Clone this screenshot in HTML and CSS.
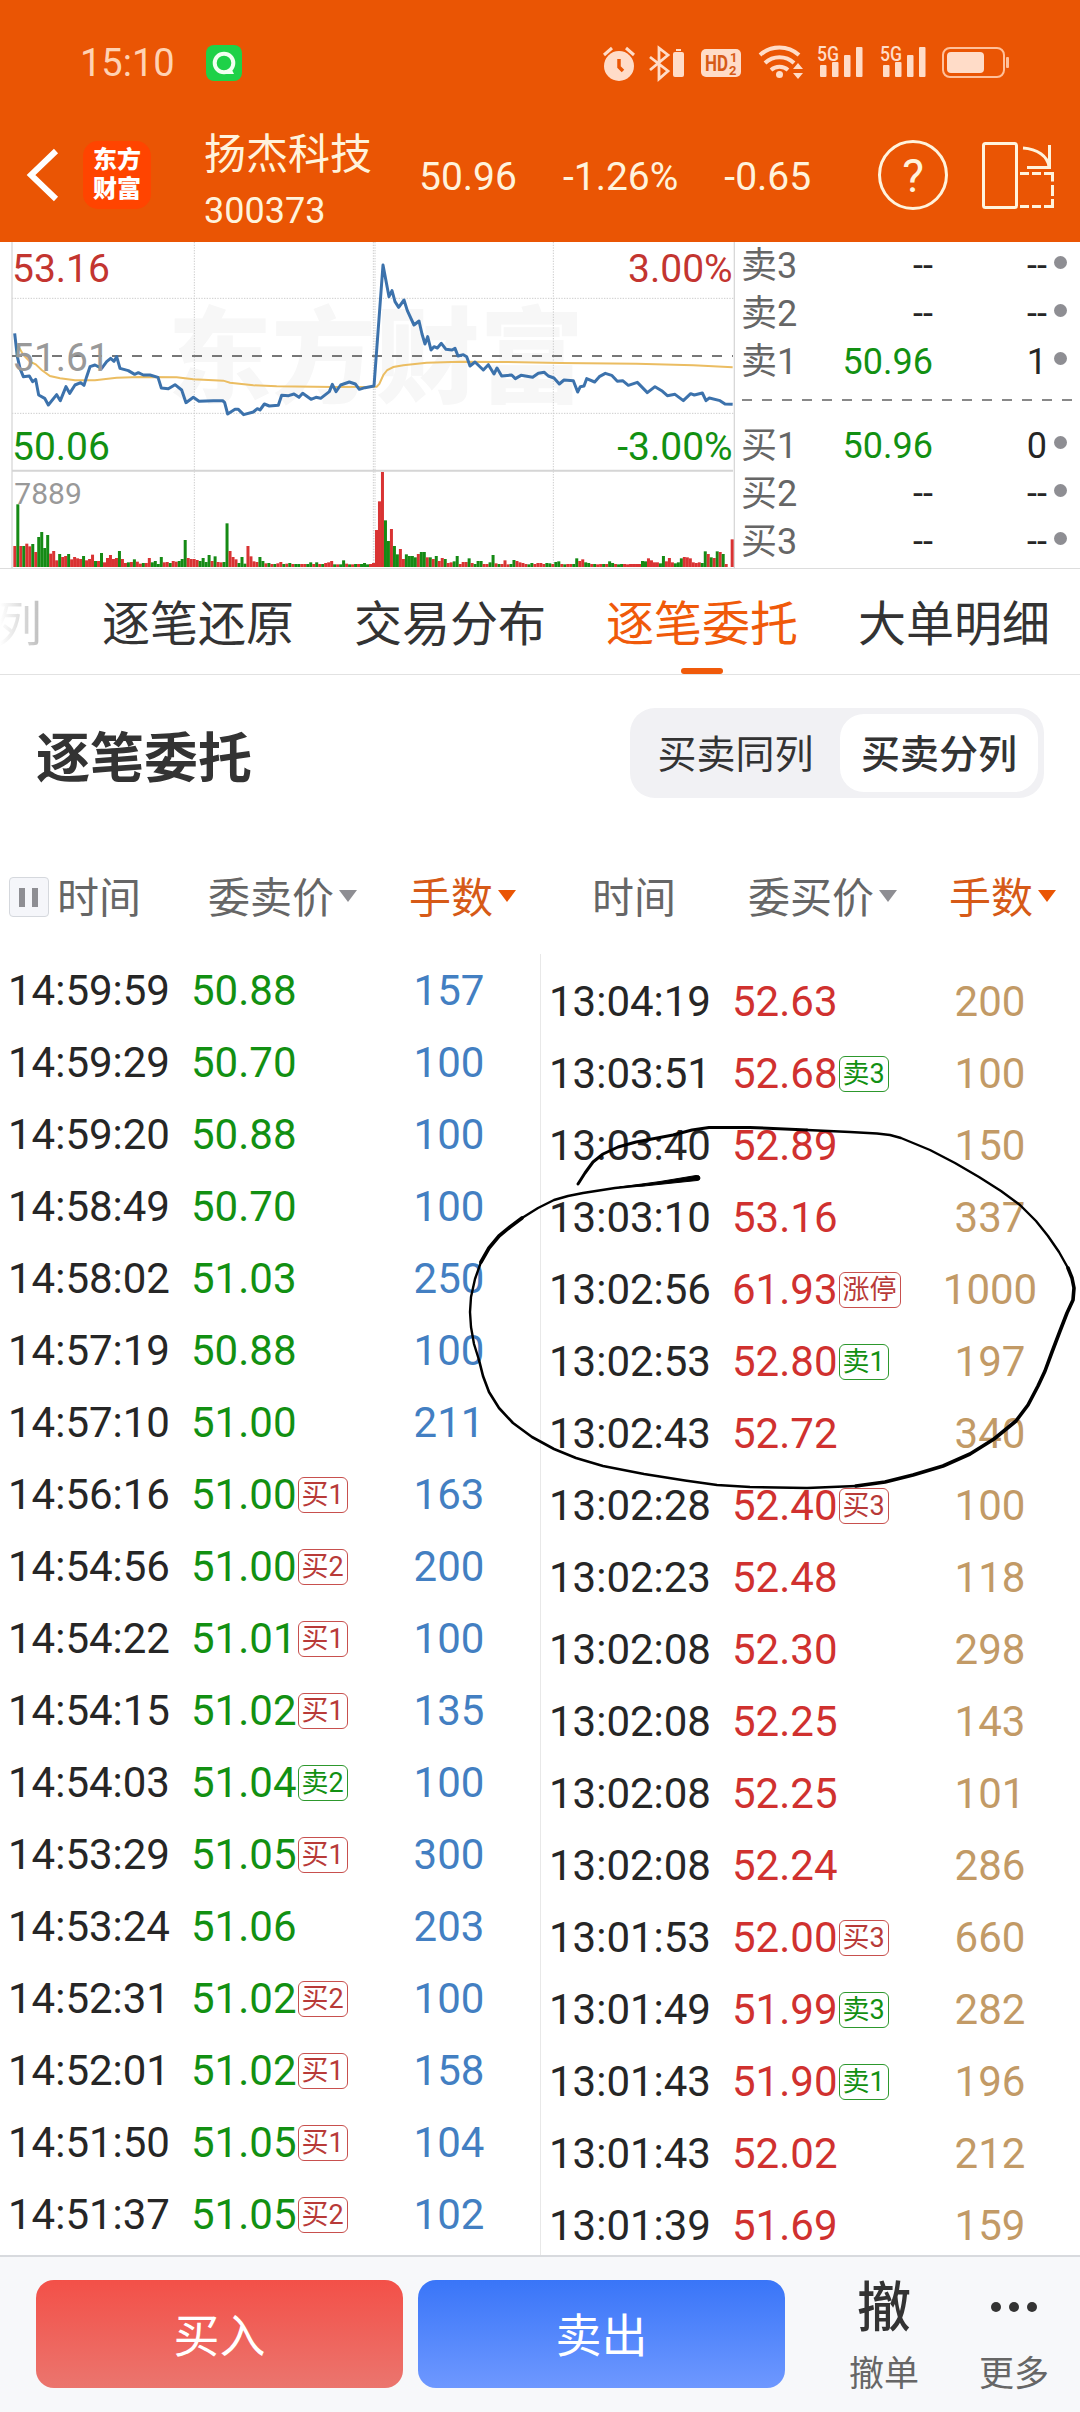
FILE: index.html
```html
<!DOCTYPE html>
<html lang="zh-CN">
<head>
    <meta charset="UTF-8">
    <meta name="viewport" content="width=device-width, initial-scale=1.0">
    <title>逐笔委托</title>
    <link rel="stylesheet" href="styles.css">
</head>
<body>
    <header class="header">
        <div class="status-bar">
            <span class="clock">15:10</span>
            <svg class="app-icon" width="36" height="36" viewBox="0 0 36 36">
                <rect width="36" height="36" rx="8" fill="#1ed148"/>
                <circle cx="18" cy="18" r="9.3" fill="none" stroke="#f2fff2" stroke-width="4"/>
                <path d="M20 26l5-3 3 6h-10z" fill="#f2fff2"/>
            </svg>
            <svg class="status-icons" width="410" height="36" viewBox="0 0 410 36" fill="#ffdcc8">
                <!-- 闹钟 -->
                <circle cx="19" cy="21" r="15"/>
                <path d="M4 10l8-7M26 3l8 7" stroke="#ffdcc8" stroke-width="3" fill="none"/>
                <path d="M19 14v8l4 4" stroke="#ea5504" stroke-width="3.5" fill="none"/>
                <!-- 蓝牙 -->
                <path d="M50 12l18 14-9 8V3l9 7-18 15" stroke="#ffdcc8" stroke-width="2.8" fill="none"/>
                <rect x="73" y="7" width="11" height="25" rx="2"/>
                <rect x="76" y="4" width="5" height="2"/>
                <!-- HD -->
                <rect x="101" y="4" width="40" height="28" rx="5"/>
                <text class="hd" x="105" y="26" textLength="23" lengthAdjust="spacingAndGlyphs">HD</text>
                <text class="hd-num" x="130" y="17">1</text>
                <text class="hd-num" x="129" y="29.500">2</text>
                <!-- WiFi -->
                <path d="M160 10a29 29 0 0 1 39 0M165 18a21 21 0 0 1 29 0M171 25a13 13 0 0 1 17 0" stroke="#ffdcc8" stroke-width="4" fill="none"/>
                <circle cx="179.500" cy="29.500" r="3.500"/>
                <path d="M193 24l5-6 5 6zM193 28l5 6 5-6z"/>
                <!-- 信号 -->
                <g id="signal">
                    <text class="net" x="217" y="16" textLength="22" lengthAdjust="spacingAndGlyphs">5G</text>
                    <rect x="220" y="20" width="6.500" height="12" rx="1"/>
                    <rect x="232" y="17" width="6.500" height="15" rx="1"/>
                    <rect x="244" y="10" width="6.500" height="22" rx="1"/>
                    <rect x="256" y="2" width="6.500" height="30" rx="1"/>
                </g>
                <use href="#signal" x="63"/>
                <!-- 电量 -->
                <rect x="343" y="3" width="61" height="29" rx="7" fill="none" stroke="#ffc09a" stroke-width="2"/>
                <rect x="347" y="7" width="37" height="21" rx="4"/>
                <rect x="406" y="12" width="3" height="11" rx="1" fill="#ffc09a"/>
            </svg>
        </div>
        <div class="nav-bar">
            <svg class="back" width="36" height="58" viewBox="0 0 36 58">
                <path d="M32 5L7 29l25 24" fill="none" stroke="#fff" stroke-width="6"/>
            </svg>
            <div class="logo">东方<br>财富</div>
            <div class="stock">
                <div class="stock-name">扬杰科技</div>
                <div class="stock-code">300373</div>
            </div>
            <div class="quote">
                <span>50.96</span>
                <span>-1.26%</span>
                <span>-0.65</span>
            </div>
            <div class="help">?</div>
            <svg class="rotate" width="76" height="70" viewBox="0 0 76 70" fill="none" stroke="#fff3dc" stroke-width="3">
                <rect x="3.500" y="3.500" width="33" height="64" rx="2"/>
                <path d="M43 8c14 1 25 8 26 19M69.500 5v23M47 27.500h24"/>
                <path d="M40 33.500h9M52 33.500h9M64 33.500h8.500v8M72.500 45v11M72.500 59v7.500h-8.500M61 66.500h-9M49 66.500h-9"/>
            </svg>
        </div>
    </header>

    <section class="market">
        <svg class="chart" width="738" height="326" viewBox="0 6 2214 978">
            <text class="watermark" x="503" y="465">东方财富</text>
            <g class="grid">
                <path d="M36 175H2200M36 520H2200M583 6V981M1120 6V981M1125 6V981M1660 6V981"/>
            </g>
            <path class="frame" d="M36 6V984M2203 6V984"/>
            <path class="frame-mid" d="M36 692H2199"/>
            <path class="zero-line" d="M36 348H2199"/>
            <g id="volume"></g>
            <polyline class="avg-line" points="56,320 70,345 90,365 107,373 125,390 150,408 180,415 225,421 285,421 350,413 420,411 530,412 580,418 670,422 690,428 760,436 830,439 1000,441 1130,440 1138,432 1150,405 1162,390 1180,381 1210,376 1280,368 1380,365 1510,366 1680,369 1910,371 2080,376 2198,382"/>
            <polyline class="price-line" points="44,280 52,350 60,385 70,410 88,408 98,425 107,418 116,465 134,475 145,495 170,464 181,482 198,440 209,460 225,435 242,428 252,436 260,410 270,380 285,375 305,385 320,365 332,355 342,364 350,350 360,385 385,392 404,403 415,398 430,405 450,405 474,412 484,444 505,446 525,434 545,450 558,488 580,472 597,484 640,482 668,482 674,488 683,522 705,508 715,508 731,524 760,516 772,506 780,510 793,492 808,498 835,496 845,466 866,467 882,462 897,472 908,460 933,478 948,472 962,475 988,455 997,433 1008,455 1022,435 1048,426 1066,432 1078,448 1095,443 1122,438 1149,75 1167,170 1176,152 1185,185 1196,202 1212,180 1222,212 1242,255 1257,243 1266,282 1275,312 1283,290 1293,330 1302,320 1312,324 1324,310 1338,328 1356,330 1365,325 1374,348 1390,344 1400,350 1410,378 1425,366 1450,390 1465,374 1482,402 1491,384 1505,408 1535,405 1546,416 1563,406 1598,412 1615,400 1633,397 1645,408 1662,414 1678,432 1692,420 1720,422 1733,456 1741,440 1752,438 1760,416 1784,426 1798,410 1816,400 1835,406 1852,424 1868,422 1885,436 1912,427 1942,458 1965,440 1985,452 2002,467 2025,463 2050,482 2072,461 2083,465 2107,459 2118,482 2128,474 2160,482 2175,492 2198,493"/>
            <text class="label red" x="36" y="126">53.16</text>
            <text class="label gray" x="36" y="393">51.61</text>
            <text class="label green" x="36" y="661">50.06</text>
            <text class="label red" x="2198" y="126" text-anchor="end">3.00%</text>
            <text class="label green" x="2198" y="661" text-anchor="end">-3.00%</text>
            <text class="vol-label" x="43" y="792">7889</text>
        </svg>
        <div class="handicap">
            <div class="level"><span>卖3</span><b>--</b><i>--</i><em></em></div>
            <div class="level"><span>卖2</span><b>--</b><i>--</i><em></em></div>
            <div class="level"><span>卖1</span><b class="green">50.96</b><i>1</i><em></em></div>
            <svg class="level-split" width="338" height="36" viewBox="0 0 338 36">
                <path d="M4 14H334" stroke="#888" stroke-width="2" stroke-dasharray="10 10"/>
            </svg>
            <div class="level"><span>买1</span><b class="green">50.96</b><i>0</i><em></em></div>
            <div class="level"><span>买2</span><b>--</b><i>--</i><em></em></div>
            <div class="level"><span>买3</span><b>--</b><i>--</i><em></em></div>
        </div>
    </section>

    <nav class="tabs">
        <div class="tab tab-cut">列</div>
        <div class="tab">逐笔还原</div>
        <div class="tab">交易分布</div>
        <div class="tab active">逐笔委托</div>
        <div class="tab">大单明细</div>
    </nav>

    <div class="title-row">
        <h2 class="title">逐笔委托</h2>
        <div class="switch">
            <div class="switch-item">买卖同列</div>
            <div class="switch-item on">买卖分列</div>
        </div>
    </div>

    <div class="table-head">
        <div class="head-half">
            <div class="pause"></div>
            <div class="head-time">时间</div>
            <div class="head-price sort">委卖价</div>
            <div class="head-hand sort active">手数</div>
        </div>
        <div class="head-half">
            <div class="head-time head-time-buy">时间</div>
            <div class="head-price sort">委买价</div>
            <div class="head-hand sort active">手数</div>
        </div>
    </div>

    <main class="orders">
        <div class="order-list sell" id="sell-list"></div>
        <div class="order-list buy" id="buy-list"></div>
        <!-- 手绘圈注 -->
        <svg class="mark" width="640" height="440" viewBox="0 0 640 440">
            <path stroke-width="3" d="M138 104L145 93 153 82 163 74 178 67 196 62 233 55 252 50 269 47.500 310 47.500 367 50"/>
            <path stroke-width="2.400" d="M367 50L410 52 437 53.500 450 55 461 58 490 70 515 83 539 97 561 111 580 125 596 141 608 156 619 172 628 188"/>
            <path stroke-width="3.600" d="M628 188L632 198 634 208 633 220 627 233 620 251 612 272 605 291 598 306 588 325 576 341 554 359 530 374 503 386 473 395 445 402 416 406"/>
            <path stroke-width="2.600" d="M416 406L367 408 310 407 277 405 245 400.500 204 394 163 386 136 378 114 369 92 357 73 343 59 328 49 312 43 296 39 280"/>
            <path stroke-width="2.400" d="M39 280L34 264 31 247 30 232 31 217 35 199 41 182"/>
            <path stroke-width="3.600" d="M41 182L49 168 59 156 70 147 82 138"/>
            <path stroke-width="2.400" d="M82 138L98 128 114 120 128 116 143 113 175 108 204 105"/>
            <path fill="#000" stroke-width="1" d="M180 107L220 101.500 256 95.500Q260 95 260 98Q260 100.500 257 100.500L204 106Z"/>
        </svg>
    </main>

    <footer class="footer">
        <button class="btn buy-btn">买入</button>
        <button class="btn sell-btn">卖出</button>
        <div class="tool"><div class="tool-icon">撤</div>撤单</div>
        <div class="tool">
            <div class="tool-icon dots"><span></span><span></span><span></span></div>
            更多
        </div>
    </footer>

    <script>
        // 时间 价格 手数 标签
        const sellData = [
            '14:59:59 50.88 157', '14:59:29 50.70 100', '14:59:20 50.88 100',
            '14:58:49 50.70 100', '14:58:02 51.03 250', '14:57:19 50.88 100',
            '14:57:10 51.00 211', '14:56:16 51.00 163 买1', '14:54:56 51.00 200 买2',
            '14:54:22 51.01 100 买1', '14:54:15 51.02 135 买1', '14:54:03 51.04 100 卖2',
            '14:53:29 51.05 300 买1', '14:53:24 51.06 203', '14:52:31 51.02 100 买2',
            '14:52:01 51.02 158 买1', '14:51:50 51.05 104 买1', '14:51:37 51.05 102 买2'
        ];
        const buyData = [
            '13:04:19 52.63 200', '13:03:51 52.68 100 卖3', '13:03:40 52.89 150',
            '13:03:10 53.16 337', '13:02:56 61.93 1000 涨停', '13:02:53 52.80 197 卖1',
            '13:02:43 52.72 340', '13:02:28 52.40 100 买3', '13:02:23 52.48 118',
            '13:02:08 52.30 298', '13:02:08 52.25 143', '13:02:08 52.25 101',
            '13:02:08 52.24 286', '13:01:53 52.00 660 买3', '13:01:49 51.99 282 卖3',
            '13:01:43 51.90 196 卖1', '13:01:43 52.02 212', '13:01:39 51.69 159'
        ];

        function renderList(id, data) {
            document.getElementById(id).innerHTML = data.map(line => {
                const [time, price, hand, tag] = line.split(' ');
                const cls = tag && tag[0] === '卖' ? 'tag tag-sell' : 'tag';
                return `<div class="order">
                    <span class="time">${time}</span>
                    <span class="price">${price}${tag ? `<span class="${cls}">${tag}</span>` : ''}</span>
                    <span class="hand">${hand}</span>
                </div>`;
            }).join('');
        }
        renderList('sell-list', sellData);
        renderList('buy-list', buyData);

        // 成交量柱，r 红 g 绿
        const volume = ('r63 g188 r63 g63 r70 r62 g69 r45 g90 g105 g57 g96 r40 r48 r20 g39 r30 r33 g39 r23 ' +
            'r30 r26 r24 g33 r20 r24 r37 g18 r18 g42 r14 r27 r36 r24 r27 g48 r24 r12 g14 r15 g23 r16 r10 g12 r12 r27 ' +
            'g14 g18 g9 g30 r14 r15 g12 r18 r16 g18 g24 g81 r27 r24 r24 r21 g18 g27 g15 g36 r18 g32 r15 r14 ' +
            'g15 g131 r48 r30 r23 g12 g30 g10 r63 r32 r17 r15 g30 g18 r11 g12 r9 g9 r11 r15 g9 r10 g12 r9 ' +
            'g9 g9 r9 r9 g9 g14 r9 g14 r9 g9 r12 r14 r18 g8 r8 g8 g20 r10 g8 r8 g9 r9 g9 g12 g8 r9 r12 ' +
            'r111 r197 r285 g140 g78 r114 g63 g38 r54 r24 g38 g33 g33 g29 r39 g45 g45 r29 g29 r24 g33 r18 r27 g24 ' +
            'r12 r14 g17 g33 r9 r15 r15 g26 r12 g9 g18 g18 r9 r9 g14 g36 r11 g9 r9 r20 r8 g9 g21 r18 r14 r12 ' +
            'r9 g8 g12 r9 r12 r12 r9 g12 g11 r9 g15 g17 r9 g8 r9 r9 g9 g26 r18 r23 g14 g12 r9 g9 r8 r9 ' +
            'g9 r9 g17 g12 r9 g8 g9 r9 r8 r9 r9 r9 r9 g18 g17 r26 r20 r14 r14 g11 g33 r17 r27 r14 g11 g14 ' +
            'g26 r30 r29 r26 r14 r12 r14 g12 g47 r39 g29 r27 g47 r45 g39 r9 r0 r83').split(' ');
        document.getElementById('volume').innerHTML = volume.map((v, i) => {
            // 最后一根固定贴在收盘位置
            const x = i === volume.length - 1 ? 2192 : 40 + i * 2152 / (volume.length - 1);
            const h = +v.slice(1);
            return `<rect x="${x.toFixed(1)}" y="${981 - h}" width="9" height="${h}" fill="${v[0] === 'r' ? '#d93333' : '#158a15'}"/>`;
        }).join('');
    </script>
</body>
</html>
```
FILE: styles.css
```css
* {
    box-sizing: border-box;
}
body {
    margin: 0;
    width: 1080px;
    height: 2412px;
    overflow: hidden;
    display: flex;
    flex-direction: column;
    background-color: #fff;
    color: #262626;
    font-family: Roboto, "Noto Sans CJK SC", sans-serif;
}
.green {
    color: #129012;
    fill: #129012;
}
.red {
    fill: #c33530;
}
.gray {
    fill: #999;
}

/* 顶部 */
.header {
    height: 242px;
    background-color: #ea5504;
    color: #fff3dc;
}
.status-bar {
    height: 108px;
    padding: 45px 0 0 80px;
    display: flex;
    align-items: flex-start;
}
.clock {
    width: 126px;
    font-size: 38px;
    line-height: 36px;
    color: #ffd2b3;
}
.status-icons {
    margin-left: 358px;
    overflow: visible;
}
.hd {
    font-size: 22px;
    font-weight: bold;
    fill: #d65a17;
}
.hd-num {
    font-size: 13px;
    font-weight: bold;
    fill: #d65a17;
}
.net {
    font-size: 21px;
    font-weight: 500;
}
.nav-bar {
    height: 134px;
    padding-left: 24px;
    display: flex;
    align-items: center;
}
.logo {
    width: 68px;
    height: 68px;
    margin-left: 23px;
    padding-top: 5px;
    border-radius: 15px;
    background-color: #ff4400;
    color: #fff;
    font-size: 24px;
    font-weight: 900;
    line-height: 29px;
    text-align: center;
}
.stock {
    width: 215px;
    margin-left: 53px;
    padding-top: 9px;
}
.stock-name {
    font-size: 42px;
    line-height: 58px;
    padding-top: 4px;
}
.stock-code {
    font-size: 36px;
    line-height: 54px;
}
.quote {
    display: flex;
    gap: 46px;
    width: 459px;
    font-size: 39px;
    padding-top: 3px;
}
.help {
    width: 70px;
    height: 70px;
    border: 3px solid #fff3dc;
    border-radius: 50%;
    font-size: 46px;
    line-height: 66px;
    text-align: center;
}
.rotate {
    margin-left: 32px;
}

/* 分时图和盘口 */
.market {
    height: 327px;
    display: flex;
    border-bottom: 1px solid #ddd;
}
.watermark {
    font-size: 312px;
    font-weight: 900;
    fill: #f7f7f7;
}
.grid {
    stroke: #ccc;
    stroke-width: 3;
    stroke-dasharray: 4 4;
    fill: none;
}
.frame {
    stroke: #d8d8d8;
    stroke-width: 4;
}
.frame-mid {
    stroke: #d5d5d5;
    stroke-width: 6;
}
.zero-line {
    stroke: #777;
    stroke-width: 6;
    stroke-dasharray: 30 30;
}
.avg-line {
    fill: none;
    stroke: #ebbd62;
    stroke-width: 6;
}
.price-line {
    fill: none;
    stroke: #3c72ac;
    stroke-width: 9;
    stroke-linejoin: round;
}
.label {
    font-size: 117px;
}
.vol-label {
    font-size: 90px;
    fill: #999;
}
.handicap {
    width: 342px;
    padding-left: 3px;
}
.level {
    height: 48px;
    display: flex;
    align-items: center;
    font-size: 36px;
    line-height: 48px;
}
.level span {
    width: 77px;
    color: #666;
}
.level b {
    width: 115px;
    font-weight: normal;
    text-align: right;
}
.level i {
    width: 114px;
    font-style: normal;
    text-align: right;
}
.level em {
    width: 13px;
    height: 13px;
    margin: -8px 0 0 7px;
    border-radius: 50%;
    background-color: #8e8e93;
}
.level-split {
    display: block;
    margin-left: -3px;
}

/* 标签栏 */
.tabs {
    height: 106px;
    display: flex;
    gap: 60px;
    border-bottom: 1px solid #e2e2e2;
    font-size: 48px;
    line-height: 112px;
    color: #333;
}
.tab {
    flex: none;
    width: 192px;
}
.tab-cut {
    width: 42px;
    display: flex;
    justify-content: flex-end;
    background-image: linear-gradient(to right, #fff, #bbb);
    background-clip: text;
    -webkit-background-clip: text;
    color: transparent;
}
.tab.active {
    color: #f05a0a;
}
.tab.active::after {
    content: "";
    display: block;
    width: 42px;
    height: 6px;
    margin: -13px auto 0;
    border-radius: 3px;
    background-color: #f05a0a;
}

.title-row {
    height: 156px;
    padding: 0 36px;
    display: flex;
    align-items: center;
    justify-content: space-between;
}
.title {
    margin: 0;
    padding-top: 2px;
    font-size: 54px;
    color: #333;
}
.switch {
    width: 414px;
    height: 90px;
    padding: 6px;
    display: flex;
    border-radius: 25px;
    background-color: #f1f1f4;
    font-size: 39px;
    line-height: 82px;
    text-align: center;
    color: #333;
}
.switch-item {
    width: 204px;
    padding-right: 5px;
}
.switch-item.on {
    width: 198px;
    height: 78px;
    padding: 0;
    border-radius: 24px;
    background-color: #fff;
    font-weight: 500;
}

/* 表头 */
.table-head {
    height: 123px;
    display: flex;
    font-size: 42px;
    line-height: 136px;
    color: #666;
}
.head-half {
    width: 540px;
    height: 136px;
    display: flex;
    align-items: center;
}
.pause {
    width: 40px;
    height: 40px;
    margin: -5px 0 0 9px;
    padding: 10px 9px;
    border: 1px solid #d5d8dd;
    border-radius: 4px;
    background-color: #f5f6fa;
}
.pause::before {
    content: "";
    display: block;
    width: 7px;
    height: 19px;
    border: solid #8e8e93;
    border-width: 0 6px;
}
.head-time {
    width: 151px;
    margin-left: 8px;
}
.head-time-buy {
    width: 156px;
    margin-left: 52px;
}
.head-price {
    width: 201px;
}
.sort {
    display: flex;
    align-items: center;
}
.sort::after {
    content: "";
    margin: -6px 0 0 5px;
    border: solid transparent;
    border-width: 12px 9px 0;
    border-top-color: #8e8e93;
}
.sort.active {
    color: #d65a17;
}
.sort.active::after {
    border-top-color: #ea5504;
}

/* 委托列表 */
.orders {
    position: relative;
    height: 1301px;
    display: flex;
    overflow: hidden;
}
.order-list {
    width: 540px;
    padding-top: 1px;
}
.order-list.buy {
    padding-top: 12px;
    border-left: 1px solid #e8e8e8;
}
.order {
    height: 72px;
    padding-left: 8px;
    display: flex;
    align-items: center;
    font-size: 42px;
    line-height: 72px;
}
.time {
    width: 183px;
}
.price {
    width: 183px;
    display: flex;
    align-items: center;
}
.sell .price {
    color: #129012;
}
.buy .price {
    color: #d0312f;
}
.hand {
    width: 150px;
    text-align: center;
}
.sell .hand {
    color: #437fc2;
}
.buy .hand {
    color: #c29a66;
}
.tag {
    height: 36px;
    margin-left: 1px;
    padding: 0 3px;
    border: 1px solid #c8504e;
    border-radius: 6px;
    color: #b83a38;
    font-size: 27px;
    line-height: 35px;
}
.tag-sell {
    border-color: #2d982d;
    color: #129012;
}
.mark {
    position: absolute;
    left: 440px;
    top: 126px;
    fill: none;
    stroke: #000;
    stroke-linecap: round;
    stroke-linejoin: round;
}

/* 底部 */
.footer {
    height: 157px;
    padding: 23px 0 0 36px;
    display: flex;
    border-top: 2px solid #d8dade;
    background-color: #f7f8fa;
}
.btn {
    width: 367px;
    height: 108px;
    margin-right: 15px;
    padding: 0 0 4px;
    border: none;
    border-radius: 18px;
    color: #fff;
    font-family: inherit;
    font-size: 46px;
}
.buy-btn {
    background-image: linear-gradient(#f35048, #eb756e);
}
.sell-btn {
    background-image: linear-gradient(#3975f8, #6e98ff);
}
.tool {
    width: 130px;
    margin-left: 19px;
    font-size: 35px;
    line-height: 78px;
    text-align: center;
    color: #666;
}
.tool + .tool {
    margin-left: 0;
}
.tool-icon {
    height: 56px;
    font-size: 54px;
    font-weight: 500;
    line-height: 58px;
    color: #333;
}
.dots {
    display: flex;
    align-items: center;
    justify-content: center;
    gap: 8px;
    padding-bottom: 3px;
}
.dots span {
    width: 10px;
    height: 10px;
    border-radius: 50%;
    background-color: #333;
}
```
